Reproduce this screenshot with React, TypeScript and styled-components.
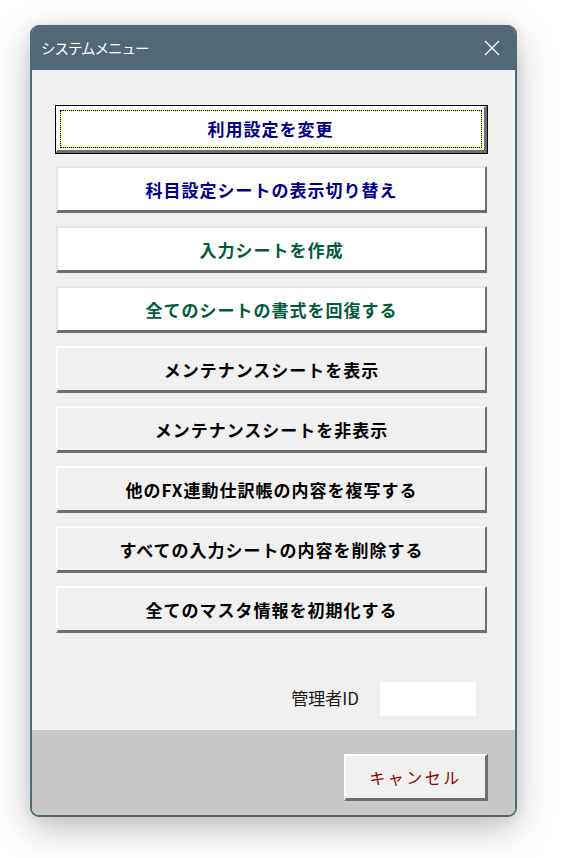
import styled, { createGlobalStyle, css } from 'styled-components';

const GlobalStyle = createGlobalStyle`
  html, body {
    margin: 0;
    padding: 0;
    background: #ffffff;
  }
  body {
    font-family: "Noto Sans CJK JP", "Noto Sans", sans-serif;
  }
`;

const Page = styled.div`
  width: 564px;
  height: 858px;
  padding: 25px 0 0 30px;
  box-sizing: border-box;
`;

const Dialog = styled.div`
  width: 487px;
  height: 792px;
  box-sizing: border-box;
  border: 2px solid #536875;
  border-top: none;
  border-radius: 9px;
  overflow: hidden;
  display: flex;
  flex-direction: column;
  background: #f0f0f0;
  box-shadow: 0 12px 36px rgba(0, 0, 0, 0.26), 0 0 14px rgba(0, 0, 0, 0.07);
`;

const TitleBar = styled.div`
  height: 45px;
  flex: none;
  background: #536875;
  display: flex;
  align-items: center;
  justify-content: space-between;
  padding: 0 17px 0 11px;
  margin: 0 -2px;
`;

const Title = styled.span`
  color: #ffffff;
  font-size: 14.5px;
  letter-spacing: -1px;
`;

const CloseIcon = styled.svg`
  width: 16px;
  height: 16px;
  display: block;
`;

const Body = styled.div`
  flex: 1;
  display: flex;
  flex-direction: column;
  padding: 36px 28px 0 24px;
`;

const ButtonList = styled.div`
  display: flex;
  flex-direction: column;
  gap: 13px;
`;

type Tone = 'navy' | 'green' | 'black';

const toneColor: Record<Tone, string> = {
  navy: '#000090',
  green: '#005c3c',
  black: '#000000',
};

const MenuButton = styled.button<{ $tone: Tone; $white?: boolean; $focused?: boolean }>`
  position: relative;
  height: 47px;
  width: 100%;
  box-sizing: border-box;
  background: ${(p) => (p.$white ? '#ffffff' : '#f0f0f0')};
  color: ${(p) => toneColor[p.$tone]};
  font-family: "Noto Sans CJK JP", sans-serif;
  font-weight: 700;
  font-size: 17px;
  letter-spacing: 1px;
  padding: 0;
  border-style: solid;
  border-width: 2px 2px 3px 2px;
  border-color: #ffffff #6e6e6e #6e6e6e #ffffff;
  ${(p) =>
    p.$white &&
    css`
      border-top-color: #e4e4e4;
      border-left-color: #e4e4e4;
    `}
  ${(p) =>
    p.$focused &&
    css`
      outline: 1px solid #000000;
      outline-offset: 0;
      border-width: 1px 3px 3px 1px;
      border-color: #ffffff #6e6e6e #6e6e6e #ffffff;
    `}
`;

const FocusRing = styled.span`
  position: absolute;
  inset: 3px 2px 2px 3px;
  border: 1px solid #f4f000;
  outline: 1px dotted #000000;
  outline-offset: -1px;
  pointer-events: none;
`;

const AdminRow = styled.div`
  display: flex;
  align-items: center;
  justify-content: flex-end;
  gap: 21px;
  margin-top: 49px;
  padding-right: 11px;
`;

const AdminLabel = styled.label`
  font-size: 17px;
  color: #1a1a1a;
  margin-top: -4px;
`;

const AdminInput = styled.input`
  width: 96px;
  height: 34px;
  box-sizing: border-box;
  border: none;
  background: #ffffff;
  outline: none;
`;

const Footer = styled.div`
  height: 85px;
  flex: none;
  background: #c8c8c8;
  display: flex;
  justify-content: flex-end;
  align-items: flex-start;
  padding: 24px 27px 0 0;
  box-sizing: border-box;
`;

const CancelButton = styled.button`
  width: 144px;
  height: 47px;
  box-sizing: border-box;
  background: #f0f0f0;
  color: #8b0000;
  font-family: "Noto Sans CJK JP", sans-serif;
  font-size: 16px;
  letter-spacing: 2.5px;
  border-style: solid;
  border-width: 2px 3px 3px 2px;
  border-color: #ffffff #6e6e6e #6e6e6e #ffffff;
  padding: 0;
`;

const menu: { label: string; tone: Tone; white?: boolean }[] = [
  { label: '利用設定を変更', tone: 'navy', white: true },
  { label: '科目設定シートの表示切り替え', tone: 'navy', white: true },
  { label: '入力シートを作成', tone: 'green', white: true },
  { label: '全てのシートの書式を回復する', tone: 'green', white: true },
  { label: 'メンテナンスシートを表示', tone: 'black' },
  { label: 'メンテナンスシートを非表示', tone: 'black' },
  { label: '他のFX連動仕訳帳の内容を複写する', tone: 'black' },
  { label: 'すべての入力シートの内容を削除する', tone: 'black' },
  { label: '全てのマスタ情報を初期化する', tone: 'black' },
];

const App = () => {
  return (
    <Page>
      <GlobalStyle />
      <Dialog>
        <TitleBar>
          <Title>システムメニュー</Title>
          <CloseIcon viewBox="0 0 16 16">
            <path d="M1 1 L15 15 M15 1 L1 15" stroke="#ffffff" strokeWidth="1.3" fill="none" />
          </CloseIcon>
        </TitleBar>
        <Body>
          <ButtonList>
            {menu.map((item, i) => (
              <MenuButton key={item.label} $tone={item.tone} $white={item.white} $focused={i === 0}>
                {i === 0 && <FocusRing />}
                {item.label}
              </MenuButton>
            ))}
          </ButtonList>
          <AdminRow>
            <AdminLabel htmlFor="admin-id">管理者ID</AdminLabel>
            <AdminInput id="admin-id" type="password" />
          </AdminRow>
        </Body>
        <Footer>
          <CancelButton>キャンセル</CancelButton>
        </Footer>
      </Dialog>
    </Page>
  );
};

export default App;
